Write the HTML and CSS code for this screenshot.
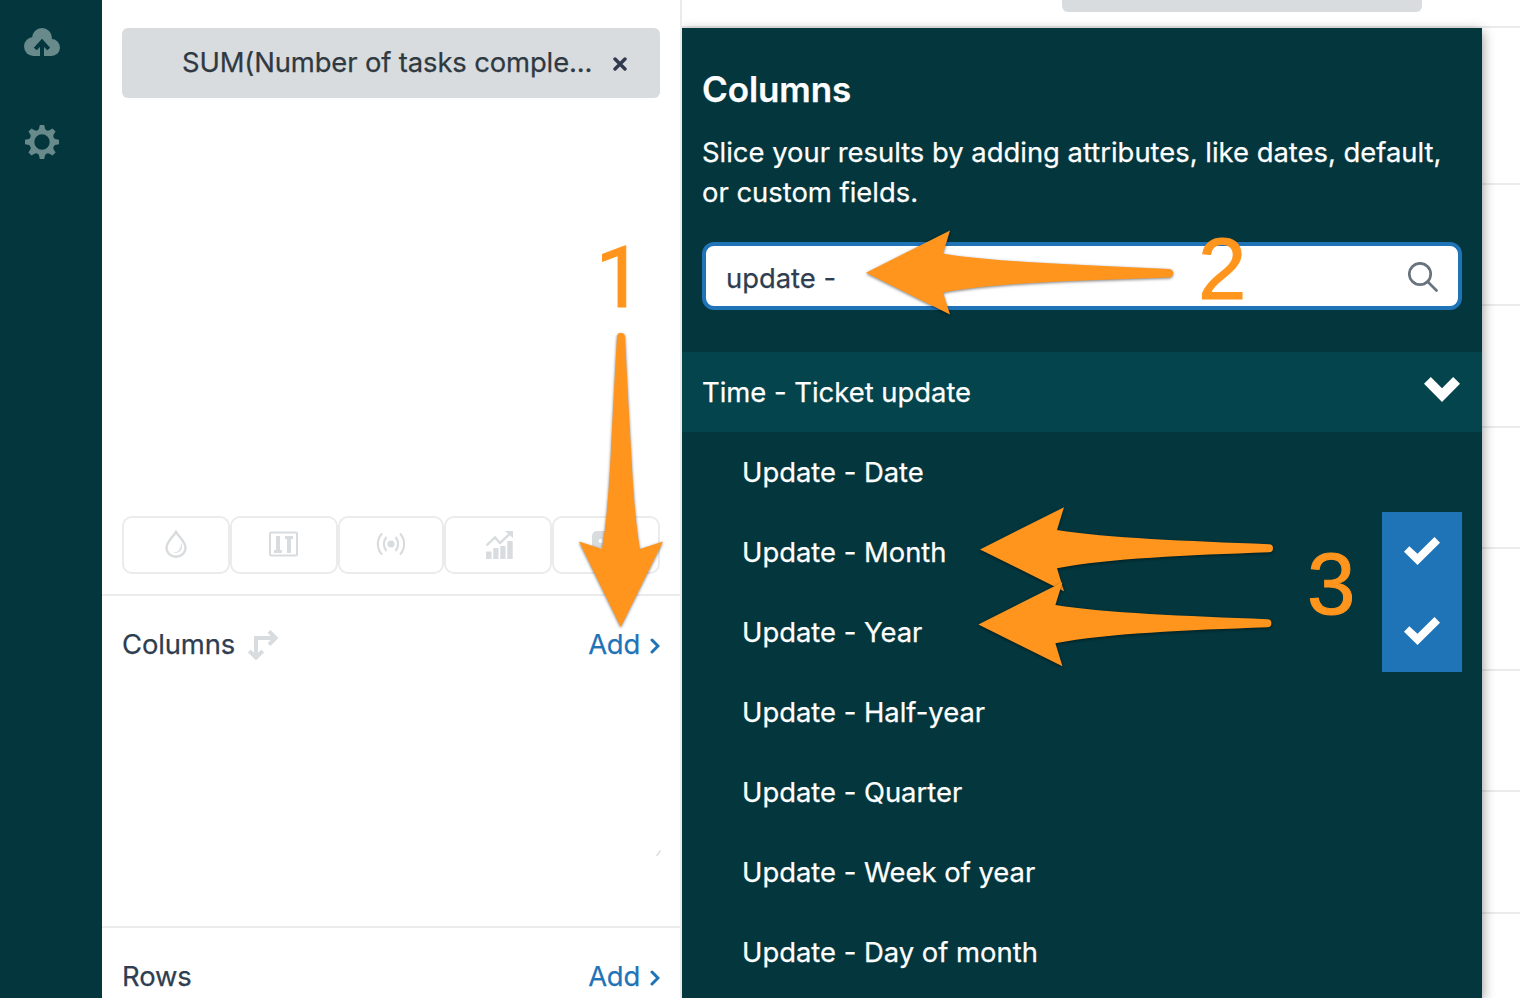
FILE: index.html
```html
<!DOCTYPE html>
<html lang="en">
<head>
  <meta charset="UTF-8" />
  <meta name="viewport" content="width=device-width, initial-scale=1.0"/>
  <title>Query builder</title>
  <link rel="stylesheet" href="styles.css">
</head>
<body>

  <nav class="sidebar">
    <svg class="nav-icon" width="36" height="28" viewBox="0 0 36 28">
      <g fill="#688a8b">
        <circle cx="18" cy="10" r="10"/>
        <circle cx="9.500" cy="18.500" r="9.500"/>
        <circle cx="27.500" cy="19.500" r="8.500"/>
        <path d="M9 14h18v14H9z"/>
      </g>
      <path fill="none" stroke="#03363d" stroke-width="4" d="M18 28V14M11.300 21l6.700-7.200 6.700 7.200"/>
    </svg>
    <svg class="nav-icon" width="34" height="34" viewBox="-17 -17 34 34">
      <g fill="#688a8b">
        <path id="tooth" d="M-2.200-17h4.400l.9 4 2.400 2.500h-11l2.400-2.500z"/>
        <use href="#tooth" transform="rotate(45)"/>
        <use href="#tooth" transform="rotate(90)"/>
        <use href="#tooth" transform="rotate(135)"/>
        <use href="#tooth" transform="rotate(180)"/>
        <use href="#tooth" transform="rotate(225)"/>
        <use href="#tooth" transform="rotate(270)"/>
        <use href="#tooth" transform="rotate(315)"/>
      </g>
      <circle r="9.900" fill="none" stroke="#688a8b" stroke-width="4.400"/>
    </svg>
  </nav>

  <div class="panel">
    <section class="metrics">
      <div class="metric-pill">
        <span class="metric-name">SUM(Number of tasks comple...</span>
        <svg width="14" height="14" viewBox="0 0 14 14"><path fill="none" stroke="#30394f" stroke-width="3.400" stroke-linecap="round" d="M2 2l10 10M12 2L2 12"/></svg>
      </div>
      <div class="tools">
        <button class="tool">
          <svg width="22" height="28" viewBox="0 0 22 28"><path fill="none" stroke="#d8dcde" stroke-width="2.400" d="M11 1.800C8 7 1.500 12 1.500 17.800a9.500 8.900 0 0 0 19 0C20.500 12 14 7 11 1.800z"/><path fill="#d8dcde" d="M16 12.500c3 6-1 11.500-8 10.300 5 0 8.500-3.800 8-10.300z"/></svg>
        </button>
        <button class="tool">
          <svg class="nudge-left" width="29" height="26" viewBox="0 0 29 26"><rect x="1" y="1.500" width="27" height="23" rx="1" fill="none" stroke="#d8dcde" stroke-width="2"/><path fill="#d8dcde" d="M7 5h4v14h2v3H5v-3h2zM16 5h8v3h-2v14h-4V8h-2z"/></svg>
        </button>
        <button class="tool narrow">
          <svg width="30" height="24" viewBox="0 0 30 24"><circle cx="15" cy="12" r="3.500" fill="#d8dcde"/><g fill="none" stroke="#d8dcde" stroke-width="2.200"><path d="M10.500 5c-3.500 4-3.500 10 0 14M19.500 5c3.500 4 3.500 10 0 14M6 1.500c-5.500 6-5.500 15 0 21M24 1.500c5.500 6 5.500 15 0 21"/></g></svg>
        </button>
        <button class="tool">
          <svg class="nudge-right" width="28" height="29" viewBox="0 0 28 29"><path fill="#d8dcde" d="M0 21.500h5.500V29H0zM7.300 18h5.200v11H7.300zM14.300 16h5.200v13h-5.200zM21.300 11h5.400v18h-5.400zM19 1h8v7z"/><path fill="none" stroke="#d8dcde" stroke-width="2.400" d="M.5 15.500l8.500-8 5 5.500L24.500 3"/></svg>
        </button>
        <button class="tool">
          <svg width="28" height="28" viewBox="0 0 28 28"><rect y="1" width="28" height="27" rx="5" fill="#d8dcde"/><g fill="#fff"><circle cx="8.500" cy="11" r="2"/><circle cx="19.500" cy="11" r="2"/><circle cx="8.500" cy="20" r="2"/><circle cx="19.500" cy="20" r="2"/></g></svg>
        </button>
      </div>
    </section>

    <section class="shelf">
      <header class="shelf-head">
        <span class="shelf-title">Columns</span>
        <svg class="swap" width="30" height="30" viewBox="0 0 30 30"><path fill="none" stroke="#d8dcde" stroke-width="4" d="M8 27V8h19M1.300 21L8 27.600 14.700 21M21 1.300L27.600 8 21 14.700"/></svg>
        <a class="add">Add <svg width="10" height="16" viewBox="0 0 10 16"><path fill="none" stroke="#1f73b7" stroke-width="3" stroke-linecap="round" d="M2 2l6 6-6 6"/></svg></a>
      </header>
      <svg class="grip" width="6" height="7" viewBox="0 0 6 7"><path stroke="#d8dcde" stroke-width="1.300" d="M1.500 6L5.500 .5"/></svg>
    </section>

    <section class="shelf rows">
      <header class="shelf-head">
        <span class="shelf-title">Rows</span>
        <a class="add">Add <svg width="10" height="16" viewBox="0 0 10 16"><path fill="none" stroke="#1f73b7" stroke-width="3" stroke-linecap="round" d="M2 2l6 6-6 6"/></svg></a>
      </header>
    </section>
  </div>

  <main class="results">
    <div class="results-head"><div class="results-tab"></div></div>
    <div class="grid-row first"></div>
    <div class="grid-row"></div>
    <div class="grid-row tall"></div>
    <div class="grid-row"></div>
    <div class="grid-row tall"></div>
    <div class="grid-row"></div>
    <div class="grid-row tall"></div>
  </main>

  <div class="dropdown">
    <h2>Columns</h2>
    <p class="hint">Slice your results by adding attributes, like dates, default,<br>or custom fields.</p>
    <div class="search">
      <span>update -</span>
      <svg width="30" height="30" viewBox="0 0 30 30"><circle cx="12" cy="12" r="10.700" fill="none" stroke="#68737d" stroke-width="2.700"/><path stroke="#68737d" stroke-width="2.700" stroke-linecap="round" d="M20 20l8.500 8.500"/></svg>
    </div>
    <div class="group">
      <span>Time - Ticket update</span>
      <svg width="36" height="25" viewBox="0 0 36 25"><path fill="#fff" d="M0 6.800L6.800 0 18 11.200 29.200 0 36 6.800 18 25z"/></svg>
    </div>
    <ul>
      <li><span>Update - Date</span></li>
      <li><span>Update - Month</span><i class="check"><svg width="36" height="28" viewBox="0 0 36 28"><path fill="#fff" d="M0 14.700L5.300 9.300l8.200 7.400L30.500 0 36 5.700 13.500 28z"/></svg></i></li>
      <li><span>Update - Year</span><i class="check"><svg width="36" height="28" viewBox="0 0 36 28"><path fill="#fff" d="M0 14.700L5.300 9.300l8.200 7.400L30.500 0 36 5.700 13.500 28z"/></svg></i></li>
      <li><span>Update - Half-year</span></li>
      <li><span>Update - Quarter</span></li>
      <li><span>Update - Week of year</span></li>
      <li><span>Update - Day of month</span></li>
    </ul>
  </div>

  <!-- numbered step markers -->
  <svg class="steps" width="1520" height="998" viewBox="0 0 1520 998">
    <path class="arrow" d="M620.700 627L579 541.500 602 549C606 527 609 490 611 450Q615 370 617 337A4 4 0 0 1 625 337Q628 400 631 450C633 490 636 527 640 549L663 541.500z"/>
    <path class="arrow" d="M866 272.700l84-42.200-7 23.200c50 8 130 11 226 15.300a4.200 4.200 0 0 1 0 8.400c-96 3-180 6-226 15l7 22.200z"/>
    <path class="arrow" d="M980 549.400l84-42.200-7 22.800c50 8 130 11 212 14.200a4 4 0 0 1 0 8c-82 3-160 6-212 16l7 23z"/>
    <path class="arrow" d="M978.400 624.500l84-42.200-7 22.800c50 8 130 11 212 14.200a4 4 0 0 1 0 8c-82 3-160 6-212 16l7 23z"/>
    <text class="num one" x="595.500" y="306.500">1</text>
    <text class="num" x="1198" y="298.500">2</text>
    <text class="num" x="1307" y="613.500">3</text>
  </svg>

</body>
</html>
```
FILE: styles.css
```css
* {
  box-sizing: border-box;
  margin: 0;
  padding: 0;
}

body {
  display: flex;
  height: 998px;
  overflow: hidden;
  position: relative;
  background: #fff;
  color: #2f3941;
  font-family: Inter, "Liberation Sans", sans-serif;
  font-size: 27.4px;
  font-feature-settings: "calt" 0;
  line-height: 40px;
  white-space: nowrap;
  -webkit-text-stroke: 0.25px currentColor;
}

svg {
  display: block;
  flex: none;
}

.sidebar {
  width: 102px;
  flex: none;
  background: #03363d;
  padding: 28px 0 0 24px;
}

.nav-icon + .nav-icon {
  margin: 69px 0 0 1px;
}

.panel {
  width: 580px;
  height: 998px;
  flex: none;
  overflow: hidden;
  background: #fff;
  border-right: 2px solid #e9ebed;
  position: relative;
  z-index: 2;
}

.metrics {
  height: 596px;
  padding: 28px 20px 20px;
  border-bottom: 2px solid #e9ebed;
  display: flex;
  flex-direction: column;
  justify-content: space-between;
}

.metric-pill {
  height: 70px;
  background: #d8dcde;
  border-radius: 6px;
  padding: 0 33px 2px 60px;
  display: flex;
  align-items: center;
  justify-content: space-between;
}

.metric-name {
  letter-spacing: -0.12px;
}

.metric-pill svg {
  margin-top: 3px;
}

.tools {
  display: flex;
}

.tool {
  width: 108px;
  height: 58px;
  border: 2px solid #e9ebed;
  border-radius: 10px;
  background: #fff;
  display: flex;
  align-items: center;
  justify-content: center;
}

.tool.narrow {
  width: 106px;
}

.tool svg {
  margin-bottom: 2px;
}

.tool .nudge-left {
  margin-right: 2px;
}

.tool .nudge-right {
  margin-left: 4px;
}

.shelf {
  height: 332px;
  padding: 0 20px;
  border-bottom: 2px solid #e9ebed;
}

.shelf.rows {
  height: 70px;
  border-bottom: none;
}

.shelf-head {
  padding-top: 28px;
  display: flex;
  align-items: center;
}

.shelf-title {
  color: #2f3d50;
  letter-spacing: -0.1px;
}

.swap {
  margin: 2px 0 0 13px;
}

.add {
  margin-left: auto;
  color: #1f73b7;
  display: flex;
  align-items: center;
  gap: 10px;
  letter-spacing: -0.2px;
}

.add svg {
  margin-top: 4px;
}

.grip {
  margin: 186px -1px 0 auto;
}

.results {
  flex: 1;
}

.results-head {
  height: 28px;
  border-bottom: 2px solid #e9ebed;
}

.results-tab {
  width: 360px;
  height: 12px;
  margin-left: 380px;
  background: #d8dcde;
  border-radius: 0 0 6px 6px;
}

.grid-row {
  height: 121px;
  border-bottom: 2px solid #ebebeb;
}

.grid-row.tall {
  height: 122px;
}

.grid-row.first {
  height: 157px;
}

.dropdown {
  position: absolute;
  left: 682px;
  top: 28px;
  width: 800px;
  height: 970px;
  padding-top: 41px;
  background: #03363d;
  color: #fff;
  box-shadow: 0 4px 12px rgba(0, 0, 0, 0.45);
  z-index: 1;
}

.dropdown h2 {
  margin-left: 20px;
  font-size: 35px;
  font-weight: 600;
  line-height: 40px;
  letter-spacing: -0.1px;
}

.hint {
  margin: 23px 20px 30px;
}

.search {
  height: 68px;
  margin: 0 20px 42px;
  padding: 4px 20px 0;
  border: 4px solid #1f73b7;
  border-radius: 12px;
  background: #fff;
  color: #2f3d50;
  display: flex;
  align-items: center;
  justify-content: space-between;
}

.search svg {
  margin-bottom: 2px;
}

.group {
  height: 80px;
  padding: 0 22px 0 20px;
  background: #04444d;
  display: flex;
  align-items: center;
  justify-content: space-between;
}

.group svg {
  margin-bottom: 5px;
}

.dropdown ul {
  list-style: none;
}

.dropdown li {
  height: 80px;
  padding: 0 20px 0 60px;
  display: flex;
  align-items: center;
  justify-content: space-between;
}

.check {
  width: 80px;
  height: 80px;
  padding-bottom: 2px;
  background: #1f73b7;
  display: flex;
  align-items: center;
  justify-content: center;
}

.steps {
  position: absolute;
  left: 0;
  top: 0;
  z-index: 3;
  pointer-events: none;
}

.arrow {
  fill: #ff951d;
  filter: drop-shadow(0 1px 1.5px rgba(0, 0, 0, 0.5));
}

.num {
  fill: #ff951d;
  stroke: #ff951d;
  stroke-width: 1px;
  -webkit-text-stroke: 1px #ff951d;
  font-family: "Liberation Sans", Arial, sans-serif;
  font-size: 87px;
}

.num.one {
  font-family: Roboto, Arial, sans-serif;
  font-size: 85px;
}
```
